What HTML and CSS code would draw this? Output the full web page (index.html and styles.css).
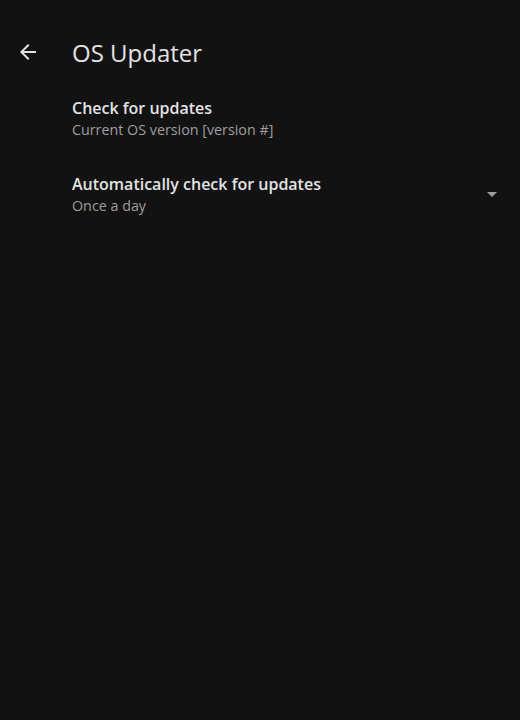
FILE: index.html
```html
<!DOCTYPE html>
<html lang="en">
<head>
    <meta charset="UTF-8">
    <meta name="viewport" content="width=device-width, initial-scale=1.0">
    <title>OS Updater</title>
    <link rel="stylesheet" href="styles.css">
</head>
<body>

<header class="toolbar">
    <button class="back" aria-label="Back">
        <svg width="24" height="24" viewBox="0 0 24 24">
            <path d="M20 11H7.83l5.59-5.59L12 4l-8 8 8 8 1.41-1.41L7.83 13H20v-2z" fill="currentColor"/>
        </svg>
    </button>
    <h1>OS Updater</h1>
</header>

<div class="prefs">
    <div class="pref">
        <div class="pref-text">
            <div class="pref-title">Check for updates</div>
            <div class="pref-summary">Current OS version [version #]</div>
        </div>
    </div>
    <div class="pref">
        <div class="pref-text">
            <div class="pref-title">Automatically check for updates</div>
            <div class="pref-summary">Once a day</div>
        </div>
        <span class="dropdown"></span>
    </div>
</div>

</body>
</html>
```

FILE: styles.css
```css
body {
    margin: 0;
    background-color: #121212;
    color: #e3e3e3;
    font-family: "Open Sans", "Noto Sans", sans-serif;
}
.toolbar {
    display: flex;
    align-items: center;
    height: 80px;
    padding: 24px 16px 0;
    box-sizing: border-box;
}
.back {
    display: flex;
    width: 24px;
    height: 24px;
    padding: 0;
    background: none;
    border: none;
    color: #e3e3e3;
}
.toolbar h1 {
    margin: 0 0 0 32px;
    font-size: 24px;
    font-weight: 400;
}
.prefs {
    padding-left: 72px;
}
.pref {
    display: flex;
    align-items: center;
    min-height: 76px;
    padding-right: 23px;
}
.pref-text {
    flex: 1;
}
.pref-title {
    font-size: 16px;
    font-weight: 600;
    line-height: 22px;
}
.pref-summary {
    font-size: 14.3px;
    line-height: 21px;
    color: #9e9e9e;
}
.dropdown {
    width: 0;
    height: 0;
    border-left: 5px solid transparent;
    border-right: 5px solid transparent;
    border-top: 5px solid #9e9e9e;
}
```
